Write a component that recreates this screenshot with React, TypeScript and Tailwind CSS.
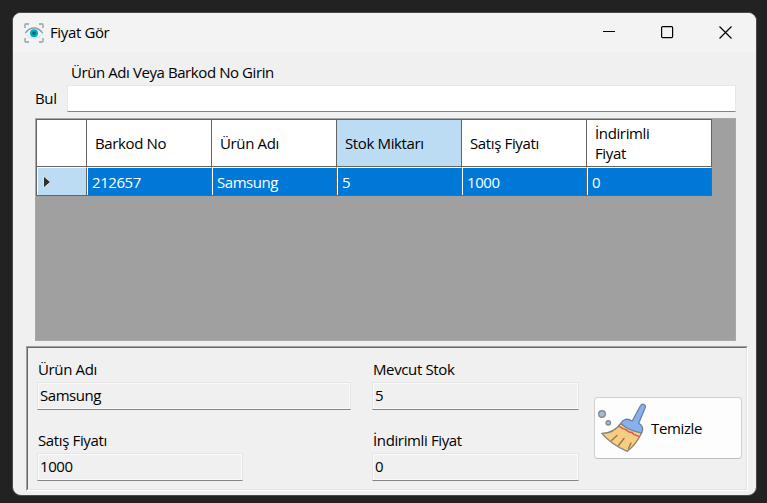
import type { ReactNode } from "react";

const columns = ["Barkod No", "Ürün Adı", "Stok Miktarı", "Satış Fiyatı", "İndirimli Fiyat"];
const row = ["212657", "Samsung", "5", "1000", "0"];

function EyeIcon() {
  return (
    <svg width="20" height="20" viewBox="0 0 20 20" fill="none">
      <path d="M1 5V1.9Q1 1 1.9 1H5M15 1h3.1q.9 0 .9.9V5M19 15v3.1q0 .9-.9.9H15M5 19H1.9Q1 19 1 18.100V15" stroke="#a5b4bc" strokeWidth="1.8" />
      <path d="M1.500 10.500Q5 5.200 10 5.200T18.500 10.500Q15 15.500 10 15.500T1.500 10.500Z" fill="#f5f9fa" stroke="#cbd8dd" strokeWidth=".8" />
      <path d="M1.300 10.200Q5 5 10 5T18.700 10.200" stroke="#8ca0ab" strokeWidth="1.400" />
      <circle cx="10" cy="10.200" r="4" fill="#00acc1" />
      <circle cx="10" cy="10.200" r="1.700" fill="#006673" />
    </svg>
  );
}

function BroomIcon() {
  return (
    <svg width="50" height="50" viewBox="0 0 50 50" strokeLinejoin="round" strokeLinecap="round">
      <circle cx="5" cy="11" r="3.300" fill="#a6bbd4" stroke="#82898f" strokeWidth="1.400" />
      <circle cx="11.300" cy="19.800" r="2.200" fill="#a6bbd4" stroke="#82898f" strokeWidth="1.400" />
      <path d="M23.800 20.500C19.500 26.500 13 30.300 4.800 30.300C11 37.500 20 44 30.300 48.300C36 44 41 37.500 44.600 30Z" fill="#f6cd82" stroke="#85817a" strokeWidth="1.300" />
      <path d="M20 32.500L14.500 37.500M27 35.500L21.500 42.500M34 40L31.500 45.500" fill="none" stroke="#9b7a42" strokeWidth="1.400" />
      <path d="M22.300 23.400l3.700 2.200 3 1 2.500 2.200 3.200.6 2.500 2.200 4.600 1.800" fill="none" stroke="#dc5947" strokeWidth="1.500" />
      <path d="M35.200 18L43.500 2.800Q44.800.7 47 1.500Q49 2.500 48.200 4.800L41.700 20.300C45.800 22.800 46.500 26 44.700 29.800C37.500 29 29.500 25.500 23.700 20.500C26.200 15.800 30.500 15 35.200 18Z" fill="#85b1ee" stroke="#6f8195" strokeWidth="1.300" />
    </svg>
  );
}

function Field({ label, value, width }: { label: string; value: string; width: string }) {
  return (
    <div className="h-[71px]">
      <div className="h-[23px] pl-px leading-[20px]">{label}</div>
      <div className={`${width} h-[28px] border border-[#e5e5e5] border-b-[#858585] pl-[2px] leading-[25px] tracking-[-0.45px] shadow-[inset_0_0_0_1px_#fafafa]`}>
        {value}
      </div>
    </div>
  );
}

function Sunken({ children }: { children: ReactNode }) {
  return (
    <section className="ml-[13px] mt-[5px] h-[145px] w-[722px] border border-b-white border-l-[#a0a0a0] border-r-white border-t-[#a0a0a0]">
      <div className="flex h-full border border-b-[#e3e3e3] border-l-[#696969] border-r-[#e3e3e3] border-t-[#696969]">{children}</div>
    </section>
  );
}

export default function App() {
  return (
    <div className="h-[503px] w-[767px] overflow-hidden bg-[#222222] pl-[12px] pt-[12px] font-['Open_Sans',sans-serif] text-[15px] tracking-[-0.37px] text-black">
      <main className="h-[484px] w-[745px] overflow-hidden rounded-[9px] border border-[#4a4a4a] bg-[#f0f0f0]">
        <header className="flex h-[39px] items-center bg-[#f3f3f3] pl-[11px]">
          <EyeIcon />
          <h1 className="ml-[6px] font-normal">Fiyat Gör</h1>
          <div className="ml-auto mr-[24px] flex items-center gap-[45px]">
            <svg width="13" height="13" viewBox="0 0 13 13"><path d="M0 5.500h12" stroke="black" /></svg>
            <svg width="13" height="13" viewBox="0 0 13 13"><rect x=".6" y=".6" width="11" height="11" rx="1" fill="none" stroke="black" strokeWidth="1.200" /></svg>
            <svg width="13" height="13" viewBox="0 0 13 13"><path d="M.5.5l12 12M12.500.5l-12 12" stroke="black" strokeWidth="1.200" /></svg>
          </div>
        </header>
        <div className="ml-[58px] mt-[9px] h-[24px] leading-[22px] tracking-[-0.42px]">Ürün Adı Veya Barkod No Girin</div>
        <div className="flex h-[27px]">
          <label className="w-[54px] pl-[22px] leading-[27px]">Bul</label>
          <div className="w-[669px] border border-[#e7e7e7] border-b-[#858585] bg-white" />
        </div>
        <div className="ml-[22px] mt-[6px] h-[223px] w-[701px] border border-[#a8a8a8] bg-[#a0a0a0]">
          <div className="w-[676px] border-l border-t border-[#646464]">
            <div className="flex h-[47px] border-b border-[#646464] bg-white">
              <div className="w-[50px] border-r border-[#646464]" />
              {columns.map((name, i) => (
                <div key={name} className={`flex w-[125px] items-center border-r border-[#646464] pl-[8px] pr-[30px] leading-[20px] ${i === 2 ? "bg-[#bcdcf4]" : ""}`}>{name}</div>
              ))}
            </div>
            <div className="flex h-[29px] border-b border-[#646464]">
              <div className="flex w-[50px] items-center border-l border-r border-t border-l-white border-r-[#646464] border-t-white bg-[#bcdcf4] pl-[4px]">
                <svg width="10" height="14" viewBox="0 0 10 14"><path d="M1.500 1L8.500 7L1.500 13Z" fill="#303030" stroke="#e0e0e0" strokeWidth="1" /></svg>
              </div>
              {row.map((value, i) => (
                <div key={i} className="w-[125px] border-l border-r border-t border-l-white border-r-[#646464] border-t-white bg-[#0078d7] pl-[4px] leading-[28px] tracking-[-0.45px] text-white">{value}</div>
              ))}
            </div>
          </div>
        </div>
        <Sunken>
          <div className="w-[335px] pl-[9px] pt-[11px]">
            <Field label="Ürün Adı" value="Samsung" width="w-[314px]" />
            <Field label="Satış Fiyatı" value="1000" width="w-[206px]" />
          </div>
          <div className="w-[231px] pl-[9px] pt-[11px]">
            <Field label="Mevcut Stok" value="5" width="w-[207px]" />
            <Field label="İndirimli Fiyat" value="0" width="w-[207px]" />
          </div>
          <button className="mt-[49px] flex h-[62px] w-[148px] items-center rounded-[4px] border border-[#d0d0d0] border-b-[#bcbcbc] bg-[#fdfdfd] pl-[2px]">
            <BroomIcon />
            <span className="ml-[4px]">Temizle</span>
          </button>
        </Sunken>
      </main>
    </div>
  );
}
